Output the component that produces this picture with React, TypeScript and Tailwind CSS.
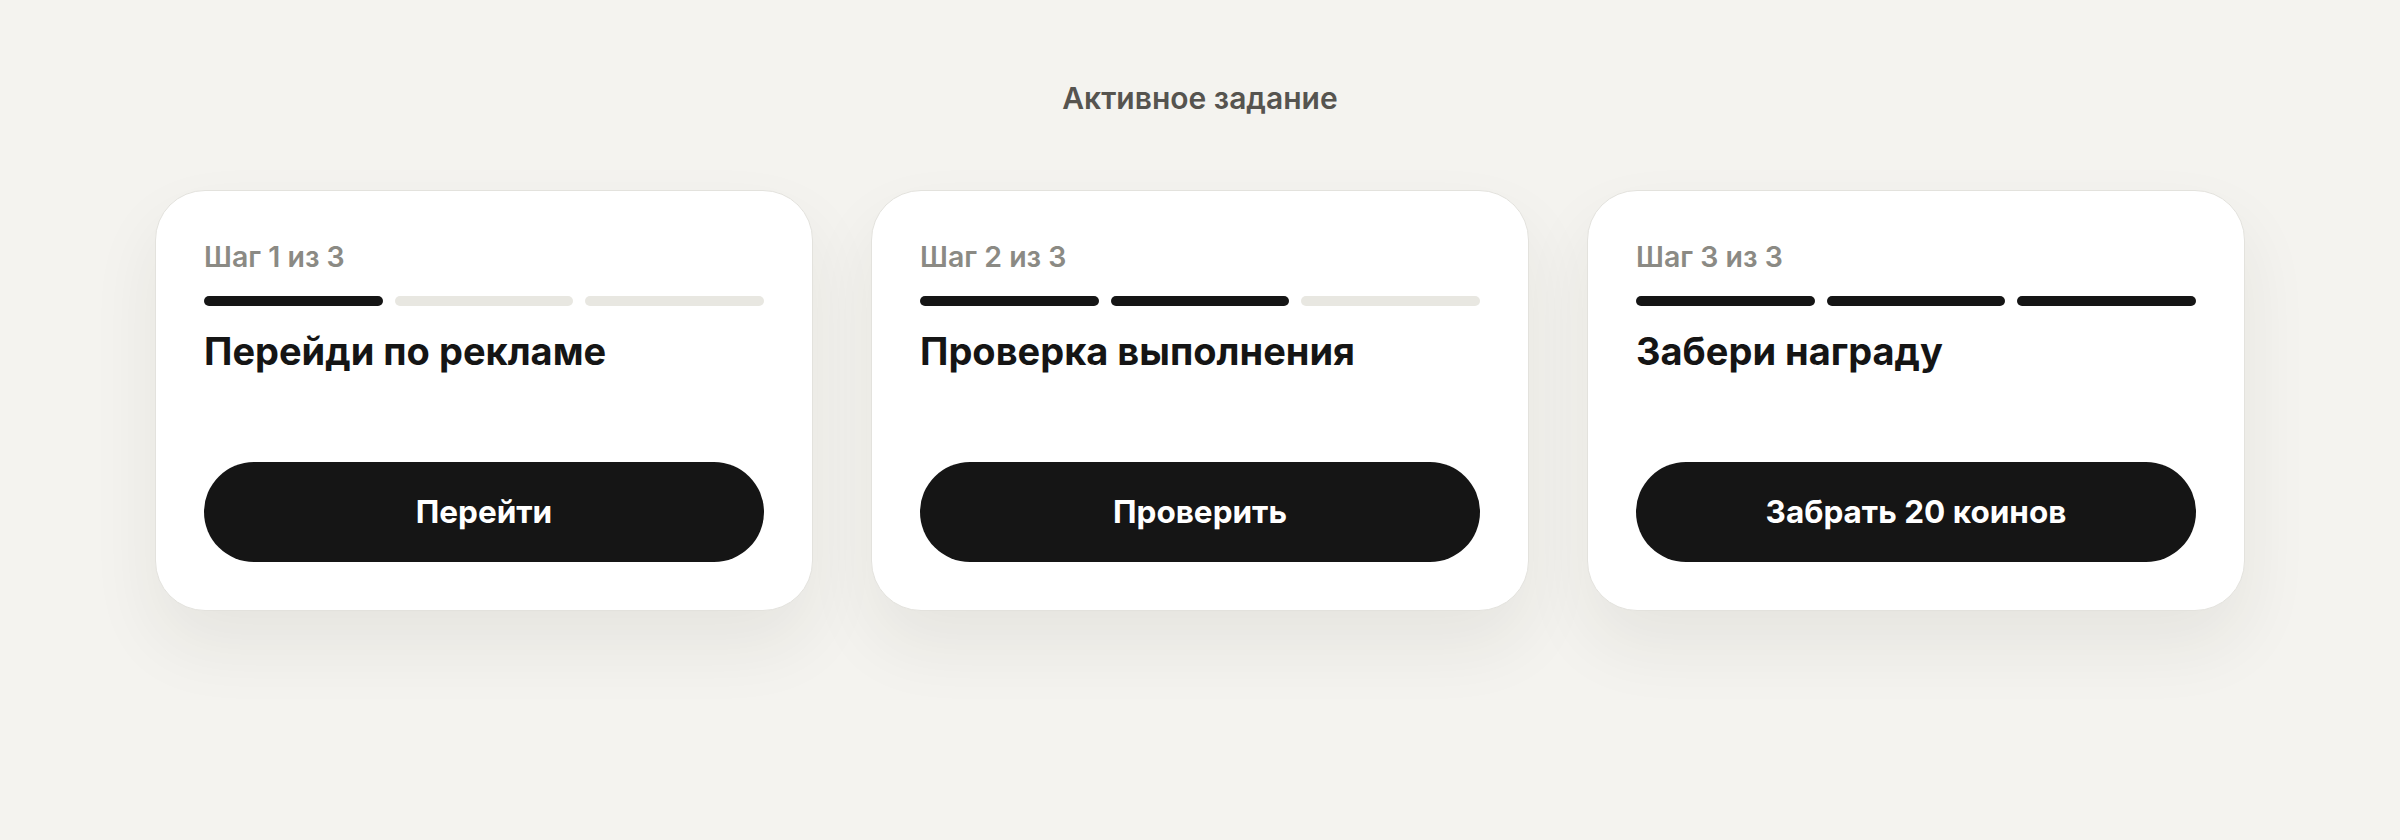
import React from "react";

const steps = [
  { step: 1, title: "Перейди по рекламе", button: "Перейти" },
  { step: 2, title: "Проверка выполнения", button: "Проверить" },
  { step: 3, title: "Забери награду", button: "Забрать 20 коинов" },
];

function Card({ step, title, button }: { step: number; title: string; button: string }) {
  return (
    <div className="flex h-[421px] w-[658px] flex-col rounded-[50px] border border-[#e3e2dd] bg-white p-12 shadow-[0_34px_70px_rgba(40,38,30,0.07)]">
      <div className="text-[28.5px] leading-[36px] font-semibold text-[#8b8a84]">Шаг {step} из 3</div>
      <div className="mt-[21px] grid grid-cols-3 gap-3">
        {[1, 2, 3].map((i) => (
          <div
            key={i}
            className={
              i <= step
                ? "h-[10px] rounded-full bg-[#151515]"
                : "h-[10px] rounded-full bg-[#e8e7e1]"
            }
          />
        ))}
      </div>
      <div className="mt-[22px] text-[38px] leading-[46px] font-bold text-[#151515]">
        {title}
      </div>
      <button className="mt-auto flex h-[100px] w-full items-center justify-center rounded-full bg-[#151515] text-[31.5px] font-bold text-white">
        {button}
      </button>
    </div>
  );
}

export default function App() {
  return (
    <div
      className="flex min-h-[840px] w-full flex-col items-center bg-[#f4f3ef] pt-[80px]"
      style={{ fontFamily: "Inter, 'Noto Sans', sans-serif" }}
    >
      <div className="text-[30px] leading-[36px] font-semibold text-[#56544f]">Активное задание</div>
      <div className="mt-[74px] flex gap-[58px]">
        {steps.map((s) => (
          <Card key={s.step} {...s} />
        ))}
      </div>
    </div>
  );
}
